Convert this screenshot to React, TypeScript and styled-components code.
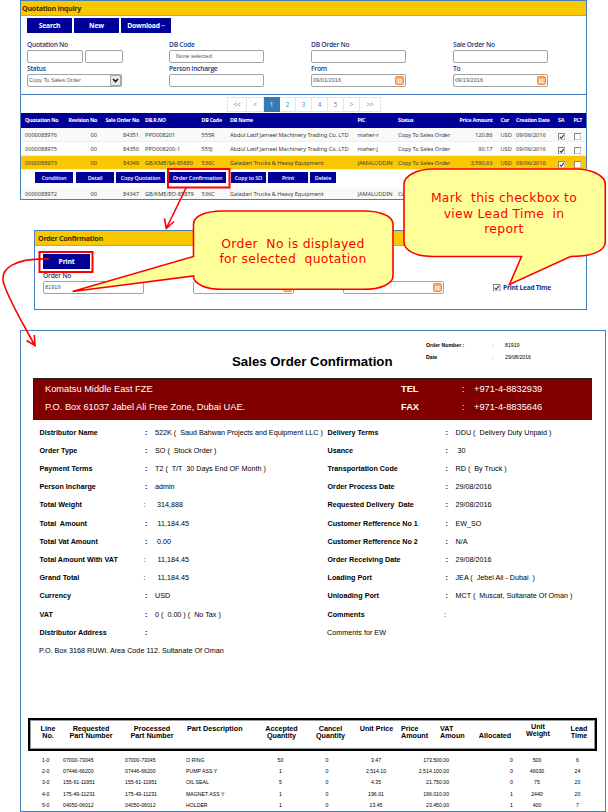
import React from "react";
import styled, { createGlobalStyle } from "styled-components";

const NAVY = "#000099";
const BLUE = "#4a7ebb";
const YELLOW = "#fac802";
const UI = '"Open Sans", "Noto Sans", sans-serif';
const ARIAL = '"Liberation Sans", Arial, sans-serif';

const GlobalStyle = createGlobalStyle`
  * { box-sizing: border-box; }
  body { margin: 0; background: #fff; }
`;

const Page = styled.main`
  position: relative;
  width: 608px;
  height: 812px;
  overflow: hidden;
  background: #fff;
  font-family: ${UI};
  white-space: pre;
`;

const Panel = styled.section<{ $x: number; $w: number; $h: number; $gap?: number }>`
  margin: ${(p) => p.$gap ?? 0}px 0 0 ${(p) => p.$x}px;
  width: ${(p) => p.$w}px;
  height: ${(p) => p.$h}px;
  border: 1px solid ${BLUE};
  overflow: hidden;
`;

const TitleBar = styled.h2<{ $inset: number }>`
  margin: 0;
  height: 15px;
  padding-left: ${(p) => p.$inset}px;
  background: ${YELLOW};
  border-bottom: 1px solid #b9ab52;
  font: 700 7.2px/14px ${UI};
  letter-spacing: -0.33px;
  color: #3d3200;
`;

const Toolbar = styled.div<{ $top?: number; $left?: number }>`
  display: flex;
  gap: 2px;
  padding: ${(p) => p.$top ?? 2}px 0 0 ${(p) => p.$left ?? 6}px;
`;

const ToolButton = styled.button<{ $w: number }>`
  width: ${(p) => p.$w}px;
  height: 15px;
  padding: 0;
  border: 0;
  background: ${NAVY};
  color: #fff;
  font: 700 6.8px/15px ${UI};
  letter-spacing: -0.2px;
  white-space: pre;
`;

const FormGrid = styled.div<{ $top: number; $pitch: number; $left?: number }>`
  display: grid;
  grid-template-columns: repeat(4, ${(p) => p.$pitch}px);
  grid-auto-rows: 24.5px;
  padding: ${(p) => p.$top}px 0 3px ${(p) => p.$left ?? 6}px;
`;

const Field = styled.label`
  display: flex;
  flex-direction: column;
`;

const FieldName = styled.span`
  height: 10px;
  font: 600 6.7px/10px ${UI};
  letter-spacing: -0.26px;
  color: #233a80;
`;

const Inputs = styled.span`
  display: flex;
  gap: 2px;
`;

const Box = styled.span<{ $w: number; $pad?: number }>`
  display: flex;
  align-items: center;
  justify-content: space-between;
  width: ${(p) => p.$w}px;
  height: 13px;
  padding-left: ${(p) => p.$pad ?? 1}px;
  border: 1px solid #a2a2a2;
  border-radius: 2px;
  background: #fff;
  font: 5.6px/11px ${ARIAL};
  color: #555;
`;

const Arrow = styled.span`
  display: grid;
  place-items: center;
  width: 11px;
  height: 11px;
  border: 1px solid #aaa;
  background: #e9e9e9;
`;

const CalendarWrap = styled.svg`
  width: 9px;
  height: 9px;
  margin-right: 1px;
`;

const Calendar = () => (
  <CalendarWrap viewBox="0 0 9 9">
    <rect x=".5" y=".5" width="8" height="8" rx="1.2" fill="#fbb983" stroke="#f08a42" />
    <path d="M2 3.5h5M2 5h5M2 6.5h5M3.4 3v4.2M5.6 3v4.2" stroke="#fff0df" strokeWidth=".5" />
    <path d="M1 2h7" stroke="#f39a55" strokeWidth="1" />
  </CalendarWrap>
);

const Pager = styled.nav`
  display: flex;
  height: 19px;
  margin-top: 2px;
  padding: 2px 0 0 206px;
  border-top: 1px solid ${BLUE};
`;

const PageCell = styled.span<{ $w: number; $active?: boolean }>`
  width: ${(p) => p.$w}px;
  height: 15px;
  border: 1px solid ${(p) => (p.$active ? "#337ab7" : "#e6e6e6")};
  border-left-width: 0;
  background: ${(p) => (p.$active ? "#337ab7" : "#fff")};
  color: ${(p) => (p.$active ? "#fff" : "#4a8ac0")};
  font: 6.2px/13px ${UI};
  text-align: center;
  &:first-child { border-left-width: 1px; }
`;

const gridCols = "76px 42px 57px 28px 128px 40px 61px 39.5px 16px 41px 17px 20px";

const GridRow = styled.div<{ $bg: string; $h: number; $head?: boolean }>`
  display: grid;
  grid-template-columns: ${gridCols};
  height: ${(p) => p.$h}px;
  background: ${(p) => p.$bg};
  border-bottom: ${(p) => (p.$head ? 0 : 1)}px solid #eee;
  color: ${(p) => (p.$head ? "#fff" : "#3c3c3c")};
  font: ${(p) => (p.$head ? "700 5.3px" : "400 5.7px")} / ${(p) => p.$h}px
    ${(p) => (p.$head ? UI : '"Noto Sans", sans-serif')};
  letter-spacing: ${(p) => (p.$head ? -0.24 : -0.06)}px;
`;

const Cell = styled.span<{ $right?: boolean }>`
  text-align: ${(p) => (p.$right ? "right" : "left")};
`;

const Pair = styled.span`
  display: flex;
  justify-content: space-between;
  padding-left: 4px;
`;

const Check = ({ on, size = 7.5 }: { on?: boolean; size?: number }) => (
  <svg width={size} height={size} viewBox="0 0 8 8">
    <rect x=".5" y=".5" width="7" height="7" fill="#fff" stroke="#777" strokeWidth=".9" />
    {on && <path d="M1.9 4l1.5 1.7L6.3 2" fill="none" stroke="#333" strokeWidth="1.1" />}
  </svg>
);

const CheckCell = styled.span`
  display: flex;
  padding-top: 5px;
`;

const ActionRow = styled.div`
  display: flex;
  height: 18px;
  padding: 2.5px 0 0 14px;
`;

const Action = styled.button<{ $w: number; $ml: number }>`
  width: ${(p) => p.$w}px;
  height: 11px;
  margin-left: ${(p) => p.$ml}px;
  padding: 0;
  border: 0;
  background: ${NAVY};
  color: #fff;
  font: 600 5.5px/10px ${UI};
  letter-spacing: -0.15px;
  white-space: pre;
`;

const LeadTime = styled.span`
  display: flex;
  align-items: center;
  gap: 2.5px;
  height: 13px;
  margin: 10px 0 0 0;
  font: 700 6.7px/13px ${UI};
  letter-spacing: -0.3px;
  color: #233a80;
`;

const SheetMeta = styled.dl`
  display: grid;
  grid-template-columns: 66px 13px 60px;
  grid-auto-rows: 12px;
  margin: 8px 0 0 405px;
  font: 5.2px/12px ${ARIAL};
  color: #000;
`;

const Plain = styled.span<{ $bold?: boolean }>`
  font-weight: ${(p) => (p.$bold ? 700 : 400)};
`;

const SheetTitle = styled.h1`
  margin: -10px 0 0 211px;
  font: 700 13.25px/18px ${ARIAL};
  color: #000;
`;

const Banner = styled.div`
  display: grid;
  grid-template-columns: 356px 61px 12px 1fr;
  grid-auto-rows: 18px;
  width: 559px;
  height: 42px;
  margin: 7px 0 0 12px;
  padding: 1px 0 0 11px;
  background: #800000;
  border: 1px solid #222;
  color: #fff;
  font: 9.27px/18px ${ARIAL};
`;

const Details = styled.div`
  display: grid;
  grid-template-columns: 288px 1fr;
  margin: 3.5px 0 0 18.5px;
`;

const DetailRow = styled.div<{ $label: number }>`
  display: grid;
  grid-template-columns: ${(p) => p.$label}px 10px 1fr;
  height: 18.23px;
  font: 7.2px/18px ${ARIAL};
  color: #000;
`;

const Value = styled.span<{ $shift?: number }>`
  padding-left: ${(p) => p.$shift ?? 0}px;
`;

const Address = styled.p`
  margin: 0 0 0 -0.5px;
  height: 18px;
  font: 7.22px/18px ${ARIAL};
  color: #000;
`;

const LineHead = styled.div`
  display: grid;
  grid-template-columns: 34px 52px 70px 63px 63px 35px 53px 39px 35px 40px 46px 33px;
  width: 569px;
  height: 33px;
  margin: 57.5px 0 0 7px;
  padding: 2px 0 0 1px;
  border: 2px solid #000;
  outline: 1px solid #999;
  outline-offset: -3px;
  font: 700 7.2px/7.2px ${ARIAL};
  color: #000;
`;

const HeadCell = styled.span<{ $align?: string; $dy?: number; $l?: number }>`
  text-align: ${(p) => p.$align ?? "center"};
  padding: ${(p) => 3 + (p.$dy ?? 0)}px 0 0 ${(p) => p.$l ?? 0}px;
`;

const LineRow = styled.div<{ $h: number }>`
  display: grid;
  grid-template-columns: 21px 62px 61px 75px 39px 54px 44px 41px 67px 11px 40px 41px;
  padding-left: 21px;
  height: ${(p) => p.$h}px;
  font: 5.2px/11px ${ARIAL};
  color: #000;
`;

const LineCell = styled.span<{ $align?: string }>`
  text-align: ${(p) => p.$align ?? "left"};
`;

const Overlay = styled.svg`
  position: absolute;
  inset: 0;
  width: 608px;
  height: 812px;
  pointer-events: none;
`;

const CalloutText = styled.p<{ $x: number; $y: number; $w: number }>`
  position: absolute;
  left: ${(p) => p.$x}px;
  top: ${(p) => p.$y}px;
  width: ${(p) => p.$w}px;
  margin: 0;
  color: #f00;
  font: 12.4px/15.7px "DejaVu Sans", Verdana, sans-serif;
  letter-spacing: 0.28px;
  text-align: center;
`;

const rows = [
  ["0000088976", "00", "84351", "PPO008201", "555R", "Abdul Latif Jameel Machinery Trading Co. LTD", "maher-r", "120.86"],
  ["0000088975", "00", "84350", "PPO008200-1", "555J", "Abdul Latif Jameel Machinery Trading Co. LTD", "maher-j", "90.17"],
  ["0000088973", "00", "84349", "GB/KME/SA-85880", "536C", "Galadari Trucks & Heavy Equipment", "JAMALUDDIN", "3,590.63"],
];

const QuoteRow = ({ r, bg, h }: { r: string[]; bg: string; h: number }) => (
  <GridRow $bg={bg} $h={h}>
    <Pair><span>{r[0]}</span><span>{r[1]}</span></Pair>
    <Cell $right>{r[2]}</Cell>
    <Value $shift={6}>{r[3]}</Value>
    <Value $shift={5.5}>{r[4]}</Value>
    <Value $shift={6}>{r[5]}</Value>
    <Value $shift={5.5}>{r[6]}</Value>
    <Value $shift={6}>Copy To Sales Order</Value>
    <Cell $right>{r[7]}</Cell>
    <Value $shift={8}>USD</Value>
    <Value $shift={7.5}>09/06/2016</Value>
    <Value $shift={8}><CheckCell><Check on /></CheckCell></Value>
    <Value $shift={7}><CheckCell><Check /></CheckCell></Value>
  </GridRow>
);

type Detail = [string, string, number?];
const left: Detail[] = [
  ["Distributor Name", "522K (  Saud Bahwan Projects and Equipment LLC )"],
  ["Order Type", "SO (  Stock Order )"],
  ["Payment Terms", "T2 (  T/T  30 Days End OF Month )"],
  ["Person Incharge", "admin"],
  ["Total Weight", "314,888", 2],
  ["Total  Amount", "11,184.45", 2.5],
  ["Total Vat Amount", "0.00", 2],
  ["Total Amount With VAT", "11,184.45", 2.5],
  ["Grand Total", "11,184.45", 2.5],
  ["Currency", "USD"],
  ["VAT", "0 (  0.00 ) (  No Tax )"],
  ["Distributor Address", ""],
];
const right: Detail[] = [
  ["Delivery Terms", "DDU (  Delivery Duty Unpaid )"],
  ["Usance", "30", 2],
  ["Transportation Code", "RD (  By Truck )"],
  ["Order Process Date", "29/08/2016"],
  ["Requested Delivery  Date", "29/08/2016"],
  ["Customer Refference No 1", "EW_SO"],
  ["Customer Refference No 2", "N/A"],
  ["Order Receiving Date", "29/08/2016"],
  ["Loading Port", "JEA (  Jebel Ali - Dubai  )"],
  ["Unloading Port", "MCT (  Muscat, Sultanate Of Oman )"],
  ["Comments", ""],
];

// These rows carry a regular-weight colon, set slightly to the left.
const lightColon = ["Total Weight", "Total Amount With VAT", "Grand Total", "Comments"];

const Colon = styled.span<{ $light: boolean }>`
  font-weight: ${(p) => (p.$light ? 400 : 700)};
  margin-left: ${(p) => (p.$light ? -1.5 : 0)}px;
`;

const DetailList = ({ items, label }: { items: Detail[]; label: number }) => (
  <>
    {items.map(([k, v, s]) => (
      <DetailRow key={k} $label={label}>
        <Plain $bold>{k}</Plain>
        <Colon $light={lightColon.includes(k)}>:</Colon>
        <Value $shift={s}>{v}</Value>
      </DetailRow>
    ))}
  </>
);

const lines: [number, string[]][] = [
  [10.7, ["1-0", "07000-73045", "O RING", "50", "0", "3.47", "173.50", "0", "500", "6"]],
  [11.4, ["2-0", "07446-66200", "PUMP ASS Y", "1", "0", "2,514.10", "2,514.10", "0", "46030", "24"]],
  [11.5, ["3-0", "155-61-11951", "OIL SEAL", "5", "0", "4.35", "21.75", "0", "75", "20"]],
  [11.5, ["4-0", "175-49-11231", "MAGNET ASS Y", "1", "0", "196.01", "196.01", "1", "2440", "20"]],
  [11, ["5-0", "04050-06012", "HOLDER", "1", "0", "23.45", "23.45", "1", "400", "7"]],
];

export default function App() {
  return (
    <Page>
      <GlobalStyle />
      <Panel $x={20} $w={567} $h={200}>
        <TitleBar $inset={1}>Quotation Inquiry</TitleBar>
        <Toolbar>
          <ToolButton $w={45}>Search</ToolButton>
          <ToolButton $w={45}>New</ToolButton>
          <ToolButton $w={50}>Download ··</ToolButton>
        </Toolbar>
        <FormGrid $top={6.5} $pitch={142}>
          <Field>
            <FieldName>Quotation No</FieldName>
            <Inputs><Box $w={56} /><Box $w={38} /></Inputs>
          </Field>
          <Field>
            <FieldName>DB Code</FieldName>
            <Box $w={95} $pad={6}>None selected</Box>
          </Field>
          <Field><FieldName>DB Order No</FieldName><Box $w={95} /></Field>
          <Field><FieldName>Sale Order No</FieldName><Box $w={95} /></Field>
          <Field>
            <FieldName>Status</FieldName>
            <Box $w={95}>
              Copy To Sales Order
              <Arrow>
                <svg width="7" height="5" viewBox="0 0 7 5"><path d="M1 1l2.5 2.6L6 1" fill="none" stroke="#111" strokeWidth="1.5" /></svg>
              </Arrow>
            </Box>
          </Field>
          <Field><FieldName>Person Incharge</FieldName><Box $w={95} /></Field>
          <Field><FieldName>From</FieldName><Box $w={95}>09/01/2016<Calendar /></Box></Field>
          <Field><FieldName>To</FieldName><Box $w={95}>09/19/2016<Calendar /></Box></Field>
        </FormGrid>
        <Pager>
          {([["<<", 20], ["<", 17], ["1", 16], ["2", 16], ["3", 16], ["4", 16], ["5", 16], [">", 16], [">>", 21]] as [string, number][]).map(
            ([t, w]) => <PageCell key={t} $w={w} $active={t === "1"}>{t}</PageCell>
          )}
        </Pager>
        <GridRow $bg={NAVY} $h={15} $head>
          <Pair><span>Quotation No</span><span>Revision No</span></Pair>
          <Cell $right>Sale Order No</Cell>
          <Value $shift={6}>DB.R.NO</Value>
          <Value $shift={5.5}>DB Code</Value>
          <Value $shift={6}>DB Name</Value>
          <Value $shift={5.5}>PIC</Value>
          <Value $shift={6}>Status</Value>
          <Cell $right>Price Amount</Cell>
          <Value $shift={8}>Cur</Value>
          <Value $shift={7.5}>Creation Date</Value>
          <Value $shift={8.5}>SA</Value>
          <Value $shift={7}>PLT</Value>
        </GridRow>
        <QuoteRow r={rows[0]} bg="#f9f9f9" h={14} />
        <QuoteRow r={rows[1]} bg="#fff" h={14} />
        <QuoteRow r={rows[2]} bg={YELLOW} h={14} />
        <ActionRow>
          <Action $w={38} $ml={0}>Condition</Action>
          <Action $w={38} $ml={3}>Detail</Action>
          <Action $w={49} $ml={2}>Copy Quotation</Action>
          <Action $w={57} $ml={4}>Order Confirmation</Action>
          <Action $w={35} $ml={5}>Copy to SO</Action>
          <Action $w={40} $ml={2}>Print</Action>
          <Action $w={26} $ml={2}>Delete</Action>
        </ActionRow>
        <GridRow $bg="#f9f9f9" $h={12}>
          <Pair><span>0000088972</span><span>00</span></Pair>
          <Cell $right>84347</Cell>
          <Value $shift={6}>GB/KME/EO-85879</Value>
          <Value $shift={5.5}>536C</Value>
          <Value $shift={6}>Galadari Trucks &amp; Heavy Equipment</Value>
          <Value $shift={5.5}>JAMALUDDIN</Value>
          <Value $shift={6}>Co</Value>
        </GridRow>
      </Panel>

      <Panel $x={34} $w={553} $h={80} $gap={30}>
        <TitleBar $inset={3}>Order Confirmation</TitleBar>
        <Toolbar $top={8} $left={8}><ToolButton $w={47}>Print</ToolButton></Toolbar>
        <FormGrid $top={2} $pitch={150} $left={8}>
          <Field><FieldName>Order No</FieldName><Box $w={101}>81919</Box></Field>
          <Field><FieldName /><Box $w={101}><i /><Calendar /></Box></Field>
          <Field><FieldName /><Box $w={101}><i /><Calendar /></Box></Field>
          <LeadTime><Check on />Print Lead Time</LeadTime>
        </FormGrid>
      </Panel>

      <Panel $x={20} $w={586} $h={482} $gap={20}>
        <SheetMeta>
          <Plain $bold>Order Number :</Plain><span>:</span><span>81919</span>
          <Plain $bold>Date</Plain><span>:</span><span>29/08/2016</span>
        </SheetMeta>
        <SheetTitle>Sales Order Confirmation</SheetTitle>
        <Banner>
          <span>Komatsu Middle East FZE</span><Plain $bold>TEL</Plain><span>:</span><span>+971-4-8832939</span>
          <span>P.O. Box 61037 Jabel Ali Free Zone, Dubai UAE.</span><Plain $bold>FAX</Plain><span>:</span><span>+971-4-8835646</span>
        </Banner>
        <Details>
          <div>
            <DetailList items={left} label={105.5} />
            <Address>P.O. Box 3168 RUWI. Area Code 112. Sultanate Of Oman</Address>
          </div>
          <div>
            <DetailList items={right} label={118} />
            <Address>Comments for EW</Address>
          </div>
        </Details>
        <LineHead>
          <HeadCell>{"Line\nNo."}</HeadCell>
          <HeadCell>{"Requested\nPart Number"}</HeadCell>
          <HeadCell>{"Processed\nPart Number"}</HeadCell>
          <HeadCell $align="left">Part Description</HeadCell>
          <HeadCell>{"Accepted\nQuantity"}</HeadCell>
          <HeadCell>{"Cancel\nQuantity"}</HeadCell>
          <HeadCell $l={4}>Unit Price</HeadCell>
          <HeadCell $align="left">{"Price\nAmount"}</HeadCell>
          <HeadCell $align="left">{"VAT\nAmoun"}</HeadCell>
          <HeadCell $dy={7.2}>Allocated</HeadCell>
          <HeadCell $dy={-2}>{"Unit\nWeight"}</HeadCell>
          <HeadCell $l={3}>{"Lead\nTime"}</HeadCell>
        </LineHead>
        <LineRow $h={4.5} />
        {lines.map(([h, c]) => (
          <LineRow key={c[0]} $h={h}>
            <LineCell>{c[0]}</LineCell>
            <LineCell>{c[1]}</LineCell>
            <LineCell>{c[1]}</LineCell>
            <LineCell>{c[2]}</LineCell>
            <LineCell $align="center">{c[3]}</LineCell>
            <LineCell $align="center">{c[4]}</LineCell>
            <LineCell $align="center">{c[5]}</LineCell>
            <LineCell $align="right">{c[6]}</LineCell>
            <LineCell>0.00</LineCell>
            <LineCell $align="center">{c[7]}</LineCell>
            <LineCell $align="center">{c[8]}</LineCell>
            <LineCell $align="center">{c[9]}</LineCell>
          </LineRow>
        ))}
      </Panel>

      <Overlay viewBox="0 0 608 812" fill="none" stroke="#f00" strokeWidth="1.6">
        <rect x="168" y="169" width="61.5" height="18.5" strokeWidth="2" />
        <path d="M186 188L166.5 228M164.5 218.5L166.3 228.5L174 221.5" />
        <rect x="39.5" y="252" width="53" height="20" strokeWidth="2" />
        <path d="M49 259C18 258 -4 267 5 287C12 306 24 325 34.5 345M26.5 340.5L35 345.5L34.3 335" />
        <path
          fill="#ffff99"
          d="M193.5 224C193.5 216 206 211 222 211H364C380 211 393 216 393 224V276C393 284 380 289.3 364 289.3H222C206 289.3 193.5 284 193.5 276L72.5 291.5L193.5 256.5Z"
        />
        <path
          fill="#ffff99"
          d="M404 184C404 176 417 169 433 169H576C592 169 605.3 176 605.3 184V242C605.3 251 592 256.5 570.5 256.5L509.5 284.5L521.5 256.5H433C417 256.5 404 251 404 242Z"
        />
      </Overlay>
      <CalloutText $x={194} $y={235.5} $w={198}>{"Order  No is displayed\nfor selected  quotation"}</CalloutText>
      <CalloutText $x={404} $y={190} $w={200}>{"Mark  this checkbox to\nview Lead Time  in\nreport"}</CalloutText>
    </Page>
  );
}
